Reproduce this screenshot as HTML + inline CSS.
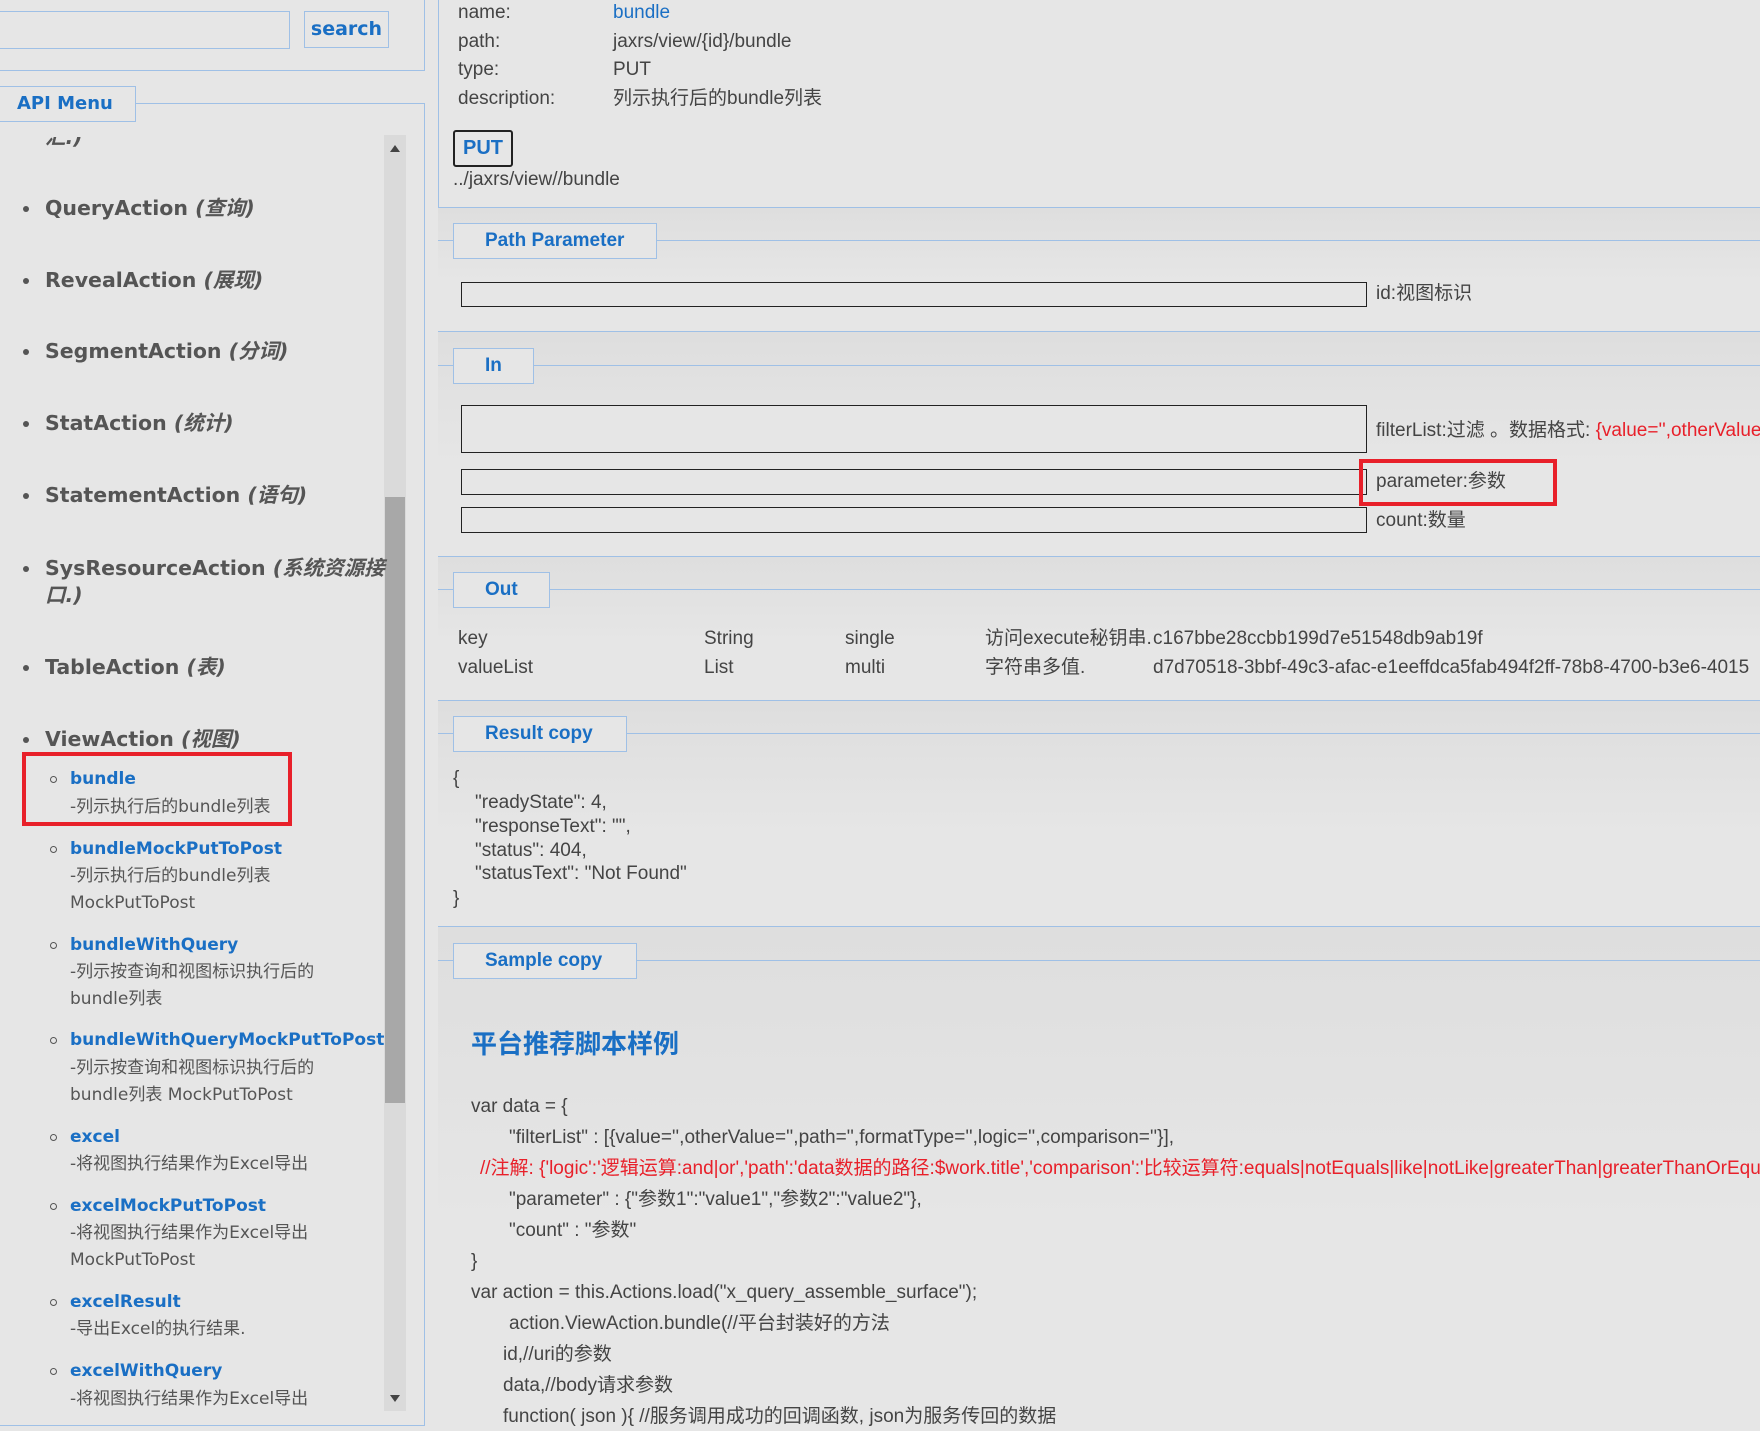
<!DOCTYPE html>
<html><head><meta charset="utf-8">
<style>
*{margin:0;padding:0;box-sizing:border-box}
html,body{width:1760px;height:1431px;overflow:hidden}
body{background:#e6e6e6;font-family:"Liberation Sans","Noto Sans CJK SC",sans-serif;color:#444;font-size:19px}
#w{position:relative;width:1760px;height:1431px;overflow:hidden}
.a{position:absolute;white-space:nowrap;line-height:26px}
.L{font-family:"DejaVu Sans","Noto Sans CJK SC",sans-serif}
.top{font-size:20.5px;font-weight:bold;color:#555}
.top i{font-style:italic}
.sub{font-size:17px;font-weight:bold;color:#1a6fc4}
.ds{font-size:17px;color:#555}
.dot{position:absolute;width:6px;height:6px;border-radius:50%;background:#555}
.cir{position:absolute;width:7px;height:7px;border-radius:50%;border:1.3px solid #555}
.lg{position:absolute;border:1px solid #9fc0e6;color:#1a6fc4;font-weight:bold;font-size:19px;line-height:34px;padding-left:31px;background:#e6e6e6}
.hl{position:absolute;height:1px;background:#9fc0e6}
.vl{position:absolute;width:1px;background:#9fc0e6}
.in{position:absolute;border:1.5px solid #222;background:#e6e6e6}
.sec{position:absolute;left:438px;right:0;background:linear-gradient(#dedede,#e6e6e6 60%)}
</style></head><body><div id="w">
<!-- left panel -->
<div style="position:absolute;left:-2px;top:11px;width:292px;height:38px;border:1px solid #9fc0e6"></div>
<div style="position:absolute;left:304px;top:11px;width:85px;height:37px;border:1px solid #9fc0e6;color:#1a6fc4;font-weight:bold;font-size:19px;line-height:35px;text-align:center" class="L">search</div>
<div class="vl" style="left:424px;top:0;height:70px"></div>
<div class="hl" style="left:0;top:70px;width:425px"></div>
<div class="hl" style="left:0;top:103px;width:425px"></div>
<div class="vl" style="left:424px;top:103px;height:1322px"></div>
<div class="hl" style="left:0;top:1425px;width:425px"></div>
<div class="lg L" style="left:-1px;top:86px;width:137px;height:36px;padding-left:17px;font-size:18px">API Menu</div>
<!-- scrollbar -->
<div style="position:absolute;left:384px;top:135px;width:22px;height:1276px;background:#dadada"></div>
<div style="position:absolute;left:385px;top:497px;width:20px;height:606px;background:#a8a8a8"></div>
<div style="position:absolute;left:390px;top:145px;border-left:5px solid transparent;border-right:5px solid transparent;border-bottom:7px solid #444"></div>
<div style="position:absolute;left:390px;top:1395px;border-left:5px solid transparent;border-right:5px solid transparent;border-top:7px solid #444"></div>

<div class="a L top" style="left:45px;top:124px;clip-path:inset(13px 0 0 0)"><i>汇.)</i></div>
<div class="dot" style="left:23px;top:206px"></div><div class="a L top" style="left:45px;top:195px">QueryAction <i>(查询)</i></div>
<div class="dot" style="left:23px;top:278px"></div><div class="a L top" style="left:45px;top:267px">RevealAction <i>(展现)</i></div>
<div class="dot" style="left:23px;top:349px"></div><div class="a L top" style="left:45px;top:338px">SegmentAction <i>(分词)</i></div>
<div class="dot" style="left:23px;top:421px"></div><div class="a L top" style="left:45px;top:410px">StatAction <i>(统计)</i></div>
<div class="dot" style="left:23px;top:493px"></div><div class="a L top" style="left:45px;top:482px">StatementAction <i>(语句)</i></div>
<div class="dot" style="left:23px;top:566px"></div><div class="a L top" style="left:45px;top:555px">SysResourceAction <i>(系统资源接</i></div>
<div class="a L top" style="left:45px;top:582px"><i>口.)</i></div>
<div class="dot" style="left:23px;top:665px"></div><div class="a L top" style="left:45px;top:654px">TableAction <i>(表)</i></div>
<div class="dot" style="left:23px;top:737px"></div><div class="a L top" style="left:45px;top:726px">ViewAction <i>(视图)</i></div>

<div style="position:absolute;left:22px;top:752px;width:270px;height:74px;border:4px solid #e8202a"></div>
<div class="cir" style="left:50px;top:776px"></div><div class="a L sub" style="left:70px;top:766px">bundle</div>
<div class="a L ds" style="left:70px;top:794px">-列示执行后的bundle列表</div>
<div class="cir" style="left:50px;top:846px"></div><div class="a L sub" style="left:70px;top:836px">bundleMockPutToPost</div>
<div class="a L ds" style="left:70px;top:863px">-列示执行后的bundle列表</div>
<div class="a L ds" style="left:70px;top:890px">MockPutToPost</div>
<div class="cir" style="left:50px;top:942px"></div><div class="a L sub" style="left:70px;top:932px">bundleWithQuery</div>
<div class="a L ds" style="left:70px;top:959px">-列示按查询和视图标识执行后的</div>
<div class="a L ds" style="left:70px;top:986px">bundle列表</div>
<div class="cir" style="left:50px;top:1037px"></div><div class="a L sub" style="left:70px;top:1027px">bundleWithQueryMockPutToPost</div>
<div class="a L ds" style="left:70px;top:1055px">-列示按查询和视图标识执行后的</div>
<div class="a L ds" style="left:70px;top:1082px">bundle列表 MockPutToPost</div>
<div class="cir" style="left:50px;top:1134px"></div><div class="a L sub" style="left:70px;top:1124px">excel</div>
<div class="a L ds" style="left:70px;top:1151px">-将视图执行结果作为Excel导出</div>
<div class="cir" style="left:50px;top:1203px"></div><div class="a L sub" style="left:70px;top:1193px">excelMockPutToPost</div>
<div class="a L ds" style="left:70px;top:1220px">-将视图执行结果作为Excel导出</div>
<div class="a L ds" style="left:70px;top:1247px">MockPutToPost</div>
<div class="cir" style="left:50px;top:1299px"></div><div class="a L sub" style="left:70px;top:1289px">excelResult</div>
<div class="a L ds" style="left:70px;top:1316px">-导出Excel的执行结果.</div>
<div class="cir" style="left:50px;top:1368px"></div><div class="a L sub" style="left:70px;top:1358px">excelWithQuery</div>
<div class="a L ds" style="left:70px;top:1386px">-将视图执行结果作为Excel导出</div>

<!-- right panel -->
<div class="vl" style="left:438px;top:0;height:1431px"></div>
<div class="a" style="left:458px;top:0">name:</div><div class="a" style="left:613px;top:0;color:#1a6fc4">bundle</div>
<div class="a" style="left:458px;top:29px">path:</div><div class="a" style="left:613px;top:29px">jaxrs/view/{id}/bundle</div>
<div class="a" style="left:458px;top:57px">type:</div><div class="a" style="left:613px;top:57px">PUT</div>
<div class="a" style="left:458px;top:86px">description:</div><div class="a" style="left:613px;top:86px">列示执行后的bundle列表</div>
<div style="position:absolute;left:453px;top:130px;width:60px;height:37px;border:2px solid #222;border-radius:3px;color:#1a6fc4;font-weight:bold;font-size:20px;text-align:center;line-height:33px">PUT</div>
<div class="a" style="left:453px;top:167px">../jaxrs/view//bundle</div>
<div class="hl" style="left:438px;top:207px;width:1322px"></div>

<div class="sec" style="top:208px;height:123px"></div>
<div class="hl" style="left:438px;top:240px;width:1322px"></div>
<div class="lg" style="left:453px;top:223px;width:204px;height:36px">Path Parameter</div>
<div class="in" style="left:461px;top:282px;width:906px;height:25px"></div>
<div class="a" style="left:1376px;top:281px">id:视图标识</div>
<div class="hl" style="left:438px;top:331px;width:1322px"></div>

<div class="sec" style="top:332px;height:224px"></div>
<div class="hl" style="left:438px;top:365px;width:1322px"></div>
<div class="lg" style="left:453px;top:348px;width:81px;height:36px">In</div>
<div class="in" style="left:461px;top:405px;width:906px;height:48px"></div>
<div class="a" style="left:1376px;top:418px">filterList:过滤 。数据格式: <span style="color:#e8202a">{value='',otherValue='',path='',formatType='',logic='',comparison=''}</span></div>
<div class="in" style="left:461px;top:469px;width:906px;height:26px"></div>
<div class="a" style="left:1376px;top:469px">parameter:参数</div>
<div style="position:absolute;left:1359px;top:459px;width:198px;height:47px;border:4px solid #e8202a"></div>
<div class="in" style="left:461px;top:507px;width:906px;height:26px"></div>
<div class="a" style="left:1376px;top:508px">count:数量</div>
<div class="hl" style="left:438px;top:556px;width:1322px"></div>

<div class="sec" style="top:557px;height:143px"></div>
<div class="hl" style="left:438px;top:589px;width:1322px"></div>
<div class="lg" style="left:453px;top:572px;width:97px;height:36px">Out</div>
<div class="a" style="left:458px;top:626px">key</div><div class="a" style="left:704px;top:626px">String</div><div class="a" style="left:845px;top:626px">single</div><div class="a" style="left:985px;top:626px">访问execute秘钥串.</div><div class="a" style="left:1153px;top:626px">c167bbe28ccbb199d7e51548db9ab19f</div>
<div class="a" style="left:458px;top:655px">valueList</div><div class="a" style="left:704px;top:655px">List</div><div class="a" style="left:845px;top:655px">multi</div><div class="a" style="left:985px;top:655px">字符串多值.</div><div class="a" style="left:1153px;top:655px">d7d70518-3bbf-49c3-afac-e1eeffdca5fab494f2ff-78b8-4700-b3e6-4015</div>
<div class="hl" style="left:438px;top:700px;width:1322px"></div>

<div class="sec" style="top:701px;height:225px"></div>
<div class="hl" style="left:438px;top:733px;width:1322px"></div>
<div class="lg" style="left:453px;top:716px;width:174px;height:36px">Result copy</div>
<div class="a" style="left:453px;top:766px">{</div>
<div class="a" style="left:475px;top:790px">"readyState": 4,</div>
<div class="a" style="left:475px;top:814px">"responseText": "",</div>
<div class="a" style="left:475px;top:838px">"status": 404,</div>
<div class="a" style="left:475px;top:861px">"statusText": "Not Found"</div>
<div class="a" style="left:453px;top:886px">}</div>
<div class="hl" style="left:438px;top:926px;width:1322px"></div>

<div class="sec" style="top:927px;height:504px"></div>
<div class="hl" style="left:438px;top:960px;width:1322px"></div>
<div class="lg" style="left:453px;top:943px;width:184px;height:36px">Sample copy</div>
<div class="a" style="left:471px;top:1028px;font-size:26px;font-weight:bold;color:#1a6fc4;line-height:32px">平台推荐脚本样例</div>
<div class="a" style="left:471px;top:1094px">var data = {</div>
<div class="a" style="left:509px;top:1125px">"filterList" : [{value='',otherValue='',path='',formatType='',logic='',comparison=''}],</div>
<div class="a" style="left:480px;top:1156px;color:#e8202a">//注解: {'logic':'逻辑运算:and|or','path':'data数据的路径:$work.title','comparison':'比较运算符:equals|notEquals|like|notLike|greaterThan|greaterThanOrEqualTo'}</div>
<div class="a" style="left:509px;top:1187px">"parameter" : {"参数1":"value1","参数2":"value2"},</div>
<div class="a" style="left:509px;top:1218px">"count" : "参数"</div>
<div class="a" style="left:471px;top:1249px">}</div>
<div class="a" style="left:471px;top:1280px">var action = this.Actions.load("x_query_assemble_surface");</div>
<div class="a" style="left:509px;top:1311px">action.ViewAction.bundle(//平台封装好的方法</div>
<div class="a" style="left:503px;top:1342px">id,//uri的参数</div>
<div class="a" style="left:503px;top:1373px">data,//body请求参数</div>
<div class="a" style="left:503px;top:1404px">function( json ){ //服务调用成功的回调函数, json为服务传回的数据</div>
</div></body></html>
